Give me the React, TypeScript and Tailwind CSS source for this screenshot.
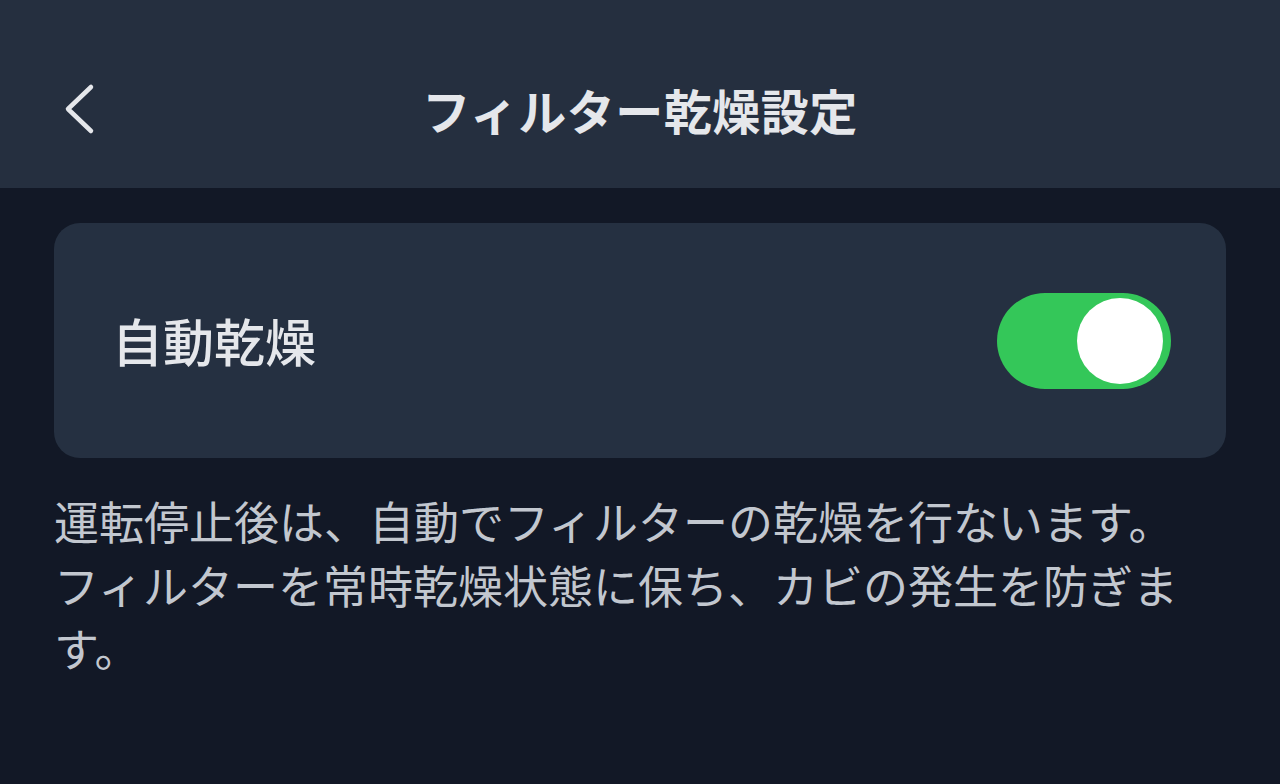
import React, { useState } from 'react'

const font = { fontFamily: '"Noto Sans CJK JP", "Noto Sans", sans-serif' }

const Toggle = ({ on, onChange }: { on: boolean; onChange: () => void }) => {
  return (
    <button
      onClick={onChange}
      className={`flex h-[96px] w-[174px] items-center rounded-full p-[6px] pr-[8px] ${on ? 'justify-end bg-[#34c759]' : 'justify-start bg-[#4b5563]'}`}
    >
      <span className='block h-[86px] w-[86px] rounded-full bg-white' />
    </button>
  )
}

const App = () => {
  const [autoDry, setAutoDry] = useState(true)

  return (
    <div className='min-h-[784px] w-full bg-[#121826]' style={font}>
      {/* Header */}
      <div className='grid h-[188px] grid-cols-[1fr_auto_1fr] items-center bg-[#252f3f] px-[62px] pt-[30px]'>
        <button className='flex h-[60px] w-[40px] items-center justify-start'>
          <svg width='34' height='52' viewBox='0 0 34 52' fill='none'>
            <path d='M29 4 L6 26 L29 48' stroke='#e5e7eb' strokeWidth='4.5' strokeLinecap='round' strokeLinejoin='round' />
          </svg>
        </button>
        <h1 className='text-[48px] font-bold tracking-[0.5px] text-[#e5e7eb]'>フィルター乾燥設定</h1>
        <div />
      </div>

      {/* Content */}
      <div className='px-[54px] pt-[35px]'>
        <div className='flex h-[235px] items-center justify-between rounded-[26px] bg-[#253041] pl-[58px] pr-[55px]'>
          <span className='text-[51px] font-medium text-[#e5e7eb]'>自動乾燥</span>
          <Toggle on={autoDry} onChange={() => setAutoDry(!autoDry)} />
        </div>
        <p className='mt-[31px] text-[45px] leading-[63.5px] text-[#c2c7cf]'>
          運転停止後は、自動でフィルターの乾燥を行ないます。
          <br />
          フィルターを常時乾燥状態に保ち、カビの発生を防ぎます。
        </p>
      </div>
    </div>
  )
}

export default App
